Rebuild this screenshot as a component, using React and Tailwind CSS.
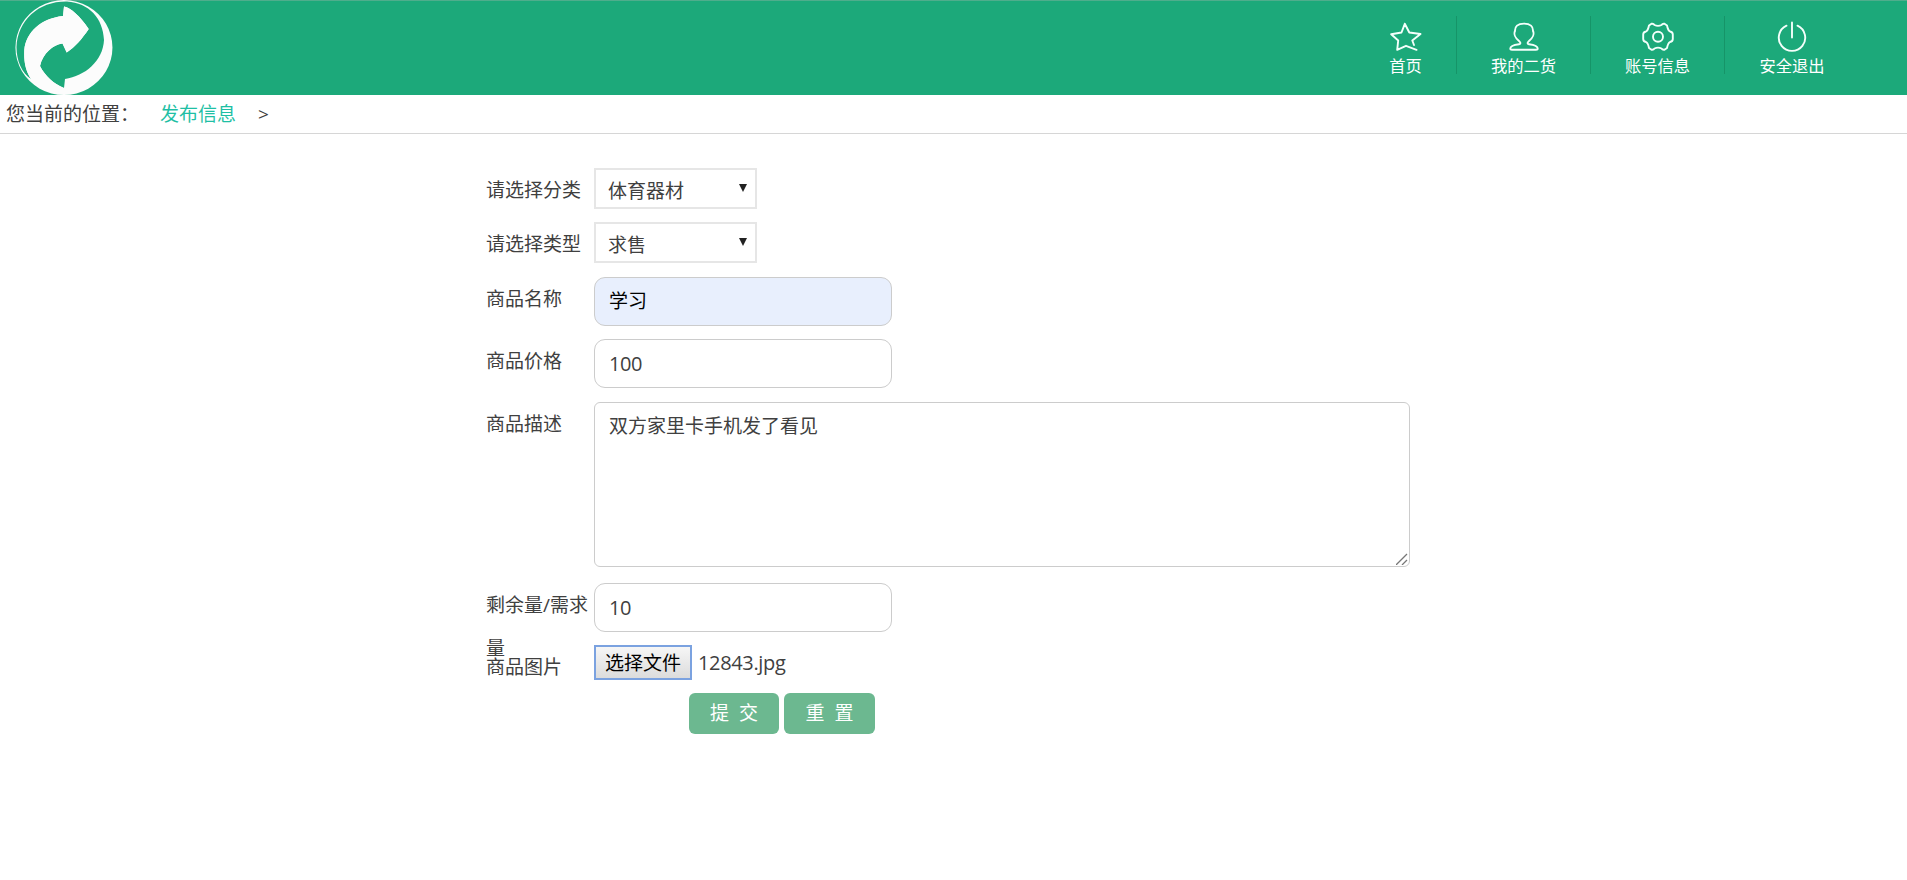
const strokeProps = {
  fill: "none",
  stroke: "#f4fffb",
  strokeWidth: 1.9,
  strokeLinejoin: "round",
  strokeLinecap: "round",
};

function Logo() {
  return (
    <svg className="h-[95px] w-[98px]" viewBox="0 0 98 95" fill="#fcfcfc">
      <path
        fillRule="evenodd"
        d="M49 0 A48.5 47.5 0 1 1 48.9 0 Z M52 1.5 C24 1 2.500 20 1.500 47 C1.500 61 7 73 16 79 C10 70 8.800 60 9.300 50 C11 32 26 18.500 48 16 L49 6.500 C56 8 65 16 73.700 29 C67 39 60 47 51.700 52.500 L47.500 43.500 C38 45 28 53 25 66 C30 76 39 84 49 88 L50 79 C70 76 88 61 89 40 C88 18 74 3 52 1.500 Z"
      />
      <path d="M16 79 C10 70 8.800 60 9.300 50 C11 32 26 18.500 48 16 L49 6.500 C56 8 65 16 73.700 29 C67 39 60 47 51.700 52.500 L47.500 43.500 C38 45 28 53 25 66 C30 76 39 84 49 88 L40 92 Z" />
    </svg>
  );
}

function StarIcon() {
  return (
    <svg className="h-8 w-8 shrink-0" viewBox="0 0 32 32" {...strokeProps}>
      <path d="M14.800 2.800 L19.300 11.500 L30.500 13 L22.300 19.500 L24 24 M26.500 28.800 L16 24.800 L7.200 28.800 L8.200 19.500 L1.200 13.200 L11.500 11.500 L14.800 2.800" />
    </svg>
  );
}

function UserIcon() {
  return (
    <svg className="h-8 w-8 shrink-0" viewBox="0 0 32 32" {...strokeProps}>
      <path d="M16 2.600 C9.500 2.600 6.800 5.500 7 10 C5.500 13 7.500 17 10.500 19.500 Q14 22.500 11 23.300 C6 24 2.300 25 2.300 27.500 Q2.300 28.800 4 28.800 H28 Q29.700 28.800 29.700 27.500 C29.700 25 26 24 21 23.300 Q18 22.500 21.500 19.500 C24.500 17 26.500 13 25 10 C25.200 5.500 22.500 2.600 16 2.600 Z" />
    </svg>
  );
}

function GearIcon() {
  return (
    <svg className="h-8 w-8 shrink-0" viewBox="0 0 32 32" {...strokeProps}>
      <path d="M9.500 2.800 Q11.500 2.400 12.500 4 Q16 5.800 19.500 4 Q20.500 2.400 22.500 2.800 L25 4.500 Q26 9.500 28 10.500 Q30.800 11 30.800 13.500 V18 Q30.800 20.500 28 21 Q26 22 25 27 L22.500 28.700 Q20.500 29.100 19.500 27.500 Q16 25.700 12.500 27.500 Q11.500 29.100 9.500 28.700 L7 27 Q6 22 4 21 Q1.200 20.500 1.200 18 V13.500 Q1.200 11 4 10.500 Q6 9.500 7 4.500 Z" />
      <circle cx="16" cy="15.800" r="5" />
    </svg>
  );
}

function PowerIcon() {
  return (
    <svg className="h-8 w-8 shrink-0" viewBox="0 0 32 32" {...strokeProps}>
      <path d="M16 1.500 V16.500 M10.500 4.700 A13.200 13.200 0 1 0 21.500 4.700" />
    </svg>
  );
}

const navItems = [
  { label: "首页", Icon: StarIcon, width: "w-[102px]" },
  { label: "我的二货", Icon: UserIcon, width: "w-[134px]" },
  { label: "账号信息", Icon: GearIcon, width: "w-[134px]" },
  { label: "安全退出", Icon: PowerIcon, width: "w-[134px]" },
];

function Header() {
  return (
    <header className="flex h-[95px] justify-between border-t border-[#4fad8c] bg-[#1ca97a]">
      <div className="-mt-px ml-[15px]">
        <Logo />
      </div>
      <nav className="mr-[48px] flex pt-[15px]">
        {navItems.map(({ label, Icon, width }, i) => (
          <a
            key={label}
            className={`${width} flex h-[58px] flex-col items-center pt-[5px] text-[16.300px] leading-[26px] text-white ${
              i < 3 ? "border-r border-[#169468]" : ""
            }`}
          >
            <Icon />
            <span>{label}</span>
          </a>
        ))}
      </nav>
    </header>
  );
}

function Row({ label, height, children }) {
  return (
    <div className={`flex ${height}`}>
      <label className="h-[44px] w-[108px] shrink-0 pt-px leading-[43px]">{label}</label>
      {children}
    </div>
  );
}

function Select({ value }) {
  return (
    <div className="flex h-[41px] w-[163px] justify-between border-2 border-[#e6e6e6] pr-2 pl-3">
      <span className="leading-[42px]">{value}</span>
      <svg className="mt-[14px] h-2 w-2" viewBox="0 0 8 8" fill="#222">
        <path d="M0 0 H8 L4 8 Z" />
      </svg>
    </div>
  );
}

function TextField({ value, tone }) {
  return (
    <div className={`h-[49px] w-[298px] rounded-[11px] border-[1.500px] border-[#ccc] pl-[14px] leading-[47px] ${tone}`}>
      {value}
    </div>
  );
}

export default function App() {
  return (
    <div className="h-[880px] overflow-hidden bg-white font-['Open_Sans','Noto_Sans_CJK_SC',sans-serif] text-[19px] text-[#404040]">
      <Header />
      <div className="flex h-[39px] border-b border-[#d6d6d6] pl-[6px] leading-[39px]">
        <span className="w-[154px]">您当前的位置：</span>
        <span className="w-[98px] text-[#1fbfa5]">发布信息</span>
        <span>&gt;</span>
      </div>
      <main className="flex flex-col pt-[34px] pl-[486px]">
        <Row label="请选择分类" height="h-[54px]">
          <Select value="体育器材" />
        </Row>
        <Row label="请选择类型" height="h-[55px]">
          <Select value="求售" />
        </Row>
        <Row label="商品名称" height="h-[62px]">
          <TextField value="学习" tone="bg-[#e8effd] text-black" />
        </Row>
        <Row label="商品价格" height="h-[63px]">
          <TextField value={<span className="text-[20px] tracking-[-0.400px]">100</span>} tone="bg-white" />
        </Row>
        <Row label="商品描述" height="h-[181px]">
          <div className="relative h-[165px] w-[816px] rounded-[6px] border-[1.500px] border-[#ccc] pt-[3px] pl-[14px] leading-[40px]">
            双方家里卡手机发了看见
            <svg className="absolute right-px bottom-px h-3 w-3" viewBox="0 0 12 12" stroke="#777" strokeWidth="1.300">
              <path d="M0 12 L11 1 M6 12 L11 7" />
            </svg>
          </div>
        </Row>
        <Row label="剩余量/需求量" height="h-[62px]">
          <TextField value={<span className="text-[20px] tracking-[-0.400px]">10</span>} tone="bg-white" />
        </Row>
        <Row label="商品图片" height="h-[48px]">
          <button className="h-[35px] w-[98px] border-2 border-[#7ba2e0] bg-linear-to-b from-[#f6f6f6] to-[#dcdcdc] leading-[32px] text-black">
            选择文件
          </button>
          <span className="ml-[6px] text-[20px] leading-[35px] tracking-[-0.350px]">12843.jpg</span>
        </Row>
        <div className="flex gap-[5px] pl-[203px] text-white">
          <button className="h-[41px] w-[90px] rounded-[6px] bg-[#6cb890]">提&nbsp; 交</button>
          <button className="h-[41px] w-[91px] rounded-[6px] bg-[#6cb890]">重&nbsp; 置</button>
        </div>
      </main>
    </div>
  );
}
